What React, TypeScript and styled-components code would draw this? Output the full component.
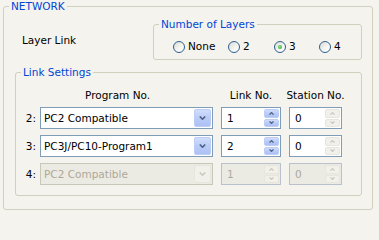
// @ts-nocheck
import React from 'react';
import styled, { createGlobalStyle } from 'styled-components';

const GlobalStyle = createGlobalStyle`
  html, body {
    margin: 0;
    padding: 0;
    background: #f4f3ee;
  }
  body {
    font-family: "DejaVu Sans", Verdana, sans-serif;
    font-size: 10.5px;
    color: #000;
  }
`;

const Page = styled.div`
  width: 379px;
  height: 214px;
  box-sizing: border-box;
  padding-left: 3px;
`;

const GroupBox = styled.fieldset`
  margin: 0;
  padding: 0;
  min-width: 0;
  box-sizing: border-box;
  border: 1px solid #d0d0bf;
  border-radius: 3px;
`;

const OuterBox = styled(GroupBox)`
  width: 370px;
  height: 210px;
`;

const Title = styled.legend`
  margin-left: 5px;
  padding: 0 2px;
  line-height: 13px;
  color: #0046d5;
`;

const TopRow = styled.div`
  display: flex;
  justify-content: space-between;
  align-items: flex-start;
  padding: 0 10px 0 18px;
`;

const FieldLabel = styled.span`
  margin-top: 21px;
  line-height: 13px;
`;

const LayersBox = styled(GroupBox)`
  margin-top: 5px;
  width: 209px;
  height: 42px;
`;

const RadioRow = styled.div`
  display: grid;
  grid-template-columns: 55px 46px 45px auto;
  margin-top: 9px;
  padding-left: 19px;
  line-height: 13px;
`;

const RadioItem = styled.label`
  display: flex;
  align-items: center;
  gap: 3px;
`;

const RadioCircle = styled.span`
  position: relative;
  width: 12px;
  height: 12px;
  box-sizing: border-box;
  border: 1px solid #2f5f90;
  border-radius: 50%;
  background: linear-gradient(135deg, #dcdcd4 0%, #f6f6f3 60%, #ffffff 100%);

  &::after {
    content: '';
    display: ${p => (p.$checked ? 'block' : 'none')};
    position: absolute;
    left: 3px;
    top: 3px;
    width: 4px;
    height: 4px;
    border-radius: 50%;
    background: radial-gradient(circle at 40% 40%, #8be08b, #21a121);
  }
`;

const SettingsBox = styled(GroupBox)`
  margin: 6px 10px 0 11px;
  height: 130px;
`;

const Table = styled.div`
  display: grid;
  grid-template-columns: 16px 173px 60px 53px;
  grid-template-rows: 13px 22px 22px 22px;
  column-gap: 8px;
  row-gap: 6px;
  margin-top: 9px;
  line-height: 13px;
`;

const Head = styled.div`
  justify-self: ${p => (p.$center ? 'center' : 'start')};
  padding-top: 1px;
  padding-left: ${p => (p.$indent || 0)}px;
  white-space: nowrap;
`;

const RowLabel = styled.div`
  align-self: center;
  justify-self: end;
  margin-right: -4px;
  white-space: nowrap;
`;

const Field = styled.div`
  display: flex;
  align-items: center;
  box-sizing: border-box;
  height: 22px;
  padding: 1px 1px 1px 3px;
  border: 1px solid ${p => (p.$disabled ? '#c9c7ba' : '#7f9db9')};
  background: ${p => (p.$disabled ? '#ecebe3' : '#fff')};
  color: ${p => (p.$disabled ? '#aca899' : '#000')};
  white-space: nowrap;
`;

const SpinField = styled(Field)`
  border-color: ${p => (p.$disabled ? '#b9c2cc' : '#7f9db9')};
  padding-left: 5px;
`;

const FieldText = styled.span`
  flex: 1;
  overflow: hidden;
`;

const DropButton = styled.div`
  display: flex;
  align-items: center;
  justify-content: center;
  width: 17px;
  height: 100%;
  box-sizing: border-box;
  border-radius: 2px;
  border: 1px solid ${p => (p.$disabled ? '#e8e6dc' : '#bccdf7')};
  background: ${p =>
    p.$disabled
      ? '#f1f0ea'
      : 'linear-gradient(to bottom, #d1ddfd 0%, #b9cbf8 50%, #adc1f4 100%)'};
  color: ${p => (p.$disabled ? '#cbc9be' : '#4d6185')};
`;

const SpinButtons = styled.div`
  display: flex;
  flex-direction: column;
  gap: 1px;
  width: 15px;
  height: 100%;
`;

const SpinHalf = styled(DropButton)`
  flex: 1;
  width: 100%;
  height: auto;
  border-radius: 2px;
`;

const Chevron = ({ up }: { up?: boolean }) => (
  <svg width="7" height="4" viewBox="0 0 7 4">
    <polyline
      points={up ? '0.8,3.5 3.5,0.8 6.2,3.5' : '0.8,0.5 3.5,3.2 6.2,0.5'}
      fill="none"
      stroke="currentColor"
      strokeWidth="1.6"
    />
  </svg>
);

const SmallChevron = ({ up }: { up?: boolean }) => (
  <svg width="5" height="3" viewBox="0 0 5 3">
    <polyline
      points={up ? '0.5,2.6 2.5,0.6 4.5,2.6' : '0.5,0.4 2.5,2.4 4.5,0.4'}
      fill="none"
      stroke="currentColor"
      strokeWidth="1.3"
    />
  </svg>
);

const Combo = ({ value, disabled }: { value: string; disabled?: boolean }) => (
  <Field $disabled={disabled}>
    <FieldText>{value}</FieldText>
    <DropButton $disabled={disabled}>
      <Chevron />
    </DropButton>
  </Field>
);

const Spin = ({ value, disabled, grey }: { value: string; disabled?: boolean; grey?: boolean }) => (
  <SpinField $disabled={disabled}>
    <FieldText>{value}</FieldText>
    <SpinButtons>
      <SpinHalf $disabled={disabled || grey}>
        <SmallChevron up />
      </SpinHalf>
      <SpinHalf $disabled={disabled || grey}>
        <SmallChevron />
      </SpinHalf>
    </SpinButtons>
  </SpinField>
);

const links = [
  { no: '2:', program: 'PC2 Compatible', link: '1', station: '0' },
  { no: '3:', program: 'PC3J/PC10-Program1', link: '2', station: '0' },
  { no: '4:', program: 'PC2 Compatible', link: '1', station: '0', disabled: true },
];

const layers = [
  { label: 'None' },
  { label: '2' },
  { label: '3', checked: true },
  { label: '4' },
];

export default function App() {
  return (
    <Page>
      <GlobalStyle />
      <OuterBox>
        <Title>NETWORK</Title>
        <TopRow>
          <FieldLabel>Layer Link</FieldLabel>
          <LayersBox>
            <Title>Number of Layers</Title>
            <RadioRow>
              {layers.map(l => (
                <RadioItem key={l.label}>
                  <RadioCircle $checked={l.checked} />
                  <span>{l.label}</span>
                </RadioItem>
              ))}
            </RadioRow>
          </LayersBox>
        </TopRow>
        <SettingsBox>
          <Title>Link Settings</Title>
          <Table>
            <span />
            <Head $indent={45}>Program No.</Head>
            <Head $center>Link No.</Head>
            <Head $center>Station No.</Head>
            {links.map(r => (
              <React.Fragment key={r.no}>
                <RowLabel>{r.no}</RowLabel>
                <Combo value={r.program} disabled={r.disabled} />
                <Spin value={r.link} disabled={r.disabled} />
                <Spin value={r.station} disabled={r.disabled} grey />
              </React.Fragment>
            ))}
          </Table>
        </SettingsBox>
      </OuterBox>
    </Page>
  );
}
